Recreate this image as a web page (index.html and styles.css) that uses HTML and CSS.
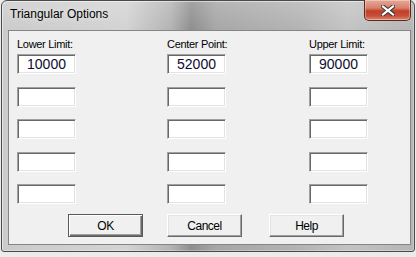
FILE: index.html
```html
<!DOCTYPE html>
<html lang="en">
<head>
  <meta charset="UTF-8">
  <title>Triangular Options</title>
  <link rel="stylesheet" href="styles.css">
</head>
<body>

<div class="window">
  <div class="titlebar">
    <span class="title">Triangular Options</span>
    <button class="close-button" title="Close">
      <svg width="14" height="11" viewBox="0 0 14 11">
        <path d="M2 1.5 L12 9.5 M12 1.5 L2 9.5" stroke="#3a3a3a" stroke-width="4.2" stroke-linecap="square"/>
        <path d="M2 1.5 L12 9.5 M12 1.5 L2 9.5" stroke="#fff" stroke-width="2.2" stroke-linecap="square"/>
      </svg>
    </button>
  </div>

  <div class="client">
    <div class="fields">
      <div class="field-col">
        <label>Lower Limit:</label>
        <input class="value-box" value="10000">
        <input class="value-box">
        <input class="value-box">
        <input class="value-box">
        <input class="value-box">
      </div>
      <div class="field-col">
        <label>Center Point:</label>
        <input class="value-box" value="52000">
        <input class="value-box">
        <input class="value-box">
        <input class="value-box">
        <input class="value-box">
      </div>
      <div class="field-col">
        <label>Upper Limit:</label>
        <input class="value-box" value="90000">
        <input class="value-box">
        <input class="value-box">
        <input class="value-box">
        <input class="value-box">
      </div>
    </div>

    <div class="button-row">
      <button class="dlg-button default">OK</button>
      <button class="dlg-button">Cancel</button>
      <button class="dlg-button help">Help</button>
    </div>
  </div>
</div>

</body>
</html>
```

FILE: styles.css
```css
body {
  margin: 0;
  width: 416px;
  height: 257px;
  overflow: hidden;
  background: #ebebeb;
  font-family: 'Liberation Sans', Arial, sans-serif;
}
.window {
  position: relative;
  box-sizing: border-box;
  width: 414px;
  height: 252px;
  margin-left: 1px;
  padding: 0 3px 6px 6px;
  border: 1px solid #4a4a4a;
  border-radius: 6px 6px 3px 3px;
  background:
    linear-gradient(to bottom, rgba(255,255,255,0.18), rgba(255,255,255,0) 30px),
    linear-gradient(to right, #cbcbcb 0%, #d3d3d3 30%, #b3b3b3 41%, #8e8e8e 46%, #a6a6a6 52%, #b3b3b3 72%, #c3c3c3 84%, #b5b5b5 100%);
  box-shadow: inset 1px 1px 0 rgba(255,255,255,0.5), inset -1px -1px 0 rgba(255,255,255,0.3);
}
.titlebar {
  height: 29px;
  display: flex;
  align-items: flex-start;
}
.title {
  margin: 5px 0 0 2px;
  font-size: 12px;
  line-height: 16px;
  color: #000;
  text-shadow: 0 0 6px rgba(255,255,255,0.8);
}
.close-button {
  position: absolute;
  top: -1px;
  right: 3px;
  width: 47px;
  height: 21px;
  padding: 0;
  display: flex;
  align-items: center;
  justify-content: center;
  border: 1px solid #5a2a22;
  border-top: none;
  border-radius: 0 0 5px 5px;
  background: linear-gradient(to bottom, #e6a897 0%, #d9806b 40%, #c13f26 55%, #c9503a 80%, #dd8a70 100%);
  box-shadow: inset 0 0 0 1px rgba(255,255,255,0.35);
}
.client {
  box-sizing: border-box;
  height: 215px;
  border: 1px solid #858585;
  background: #f0f0f0;
  padding: 7px 0 0 8px;
}
.fields {
  display: grid;
  grid-template-columns: 150px 142px 1fr;
}
.field-col {
  display: flex;
  flex-direction: column;
  align-items: flex-start;
  gap: 12.5px;
}
.field-col label {
  font-size: 11px;
  line-height: 13px;
  letter-spacing: -0.3px;
  color: #000;
  margin-bottom: -9.5px;
}
.value-box {
  box-sizing: border-box;
  width: 59px;
  height: 20px;
  padding: 0 2px;
  margin: 0;
  background: #fff;
  border: 1px solid;
  border-color: #a0a0a0 #fff #fff #a0a0a0;
  box-shadow: inset 1px 1px 0 #696969, inset -1px -1px 0 #e3e3e3;
  font-family: 'Liberation Sans', Arial, sans-serif;
  font-size: 14px;
  color: #0c0c30;
  text-align: center;
  outline: none;
}
.button-row {
  display: flex;
  gap: 24px;
  margin: 10px 0 0 51px;
}
.dlg-button {
  box-sizing: border-box;
  width: 75px;
  height: 23px;
  padding: 0;
  background: #f0f0f0;
  border: 1px solid;
  border-color: #fff #696969 #696969 #fff;
  box-shadow: inset -1px -1px 0 #a0a0a0, inset 1px 1px 0 #e3e3e3;
  font-family: 'Liberation Sans', Arial, sans-serif;
  font-size: 12px;
  letter-spacing: -0.5px;
  color: #000;
}
.dlg-button.default {
  border-color: #5a5a5a;
  box-shadow: inset 1px 1px 0 #fff, inset -1px -1px 0 #696969, inset -2px -2px 0 #a0a0a0;
}
.dlg-button.help {
  margin-left: 3px;
}
```
